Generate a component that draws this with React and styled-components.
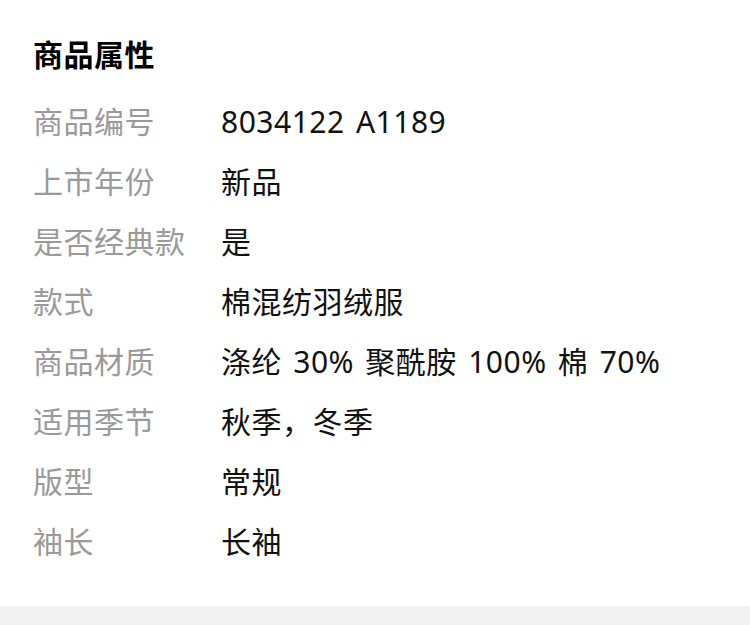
import styled, { createGlobalStyle } from "styled-components";

const GlobalStyle = createGlobalStyle`
    html, body {
        margin: 0;
        padding: 0;
        background: #ffffff;
    }
    body {
        font-family: "Noto Sans", "Noto Sans CJK SC", sans-serif;
    }
`;

const Page = styled.div`
    width: 750px;
    background: #ffffff;
`;

const Section = styled.section`
    padding: 35px 33px 34px;
`;

const Title = styled.h2`
    margin: 0 0 17px;
    font-size: 30px;
    letter-spacing: 0.5px;
    line-height: 40px;
    font-weight: 700;
    color: #000000;
`;

const AttrList = styled.dl`
    margin: 0;
    display: flex;
    flex-direction: column;
`;

const AttrRow = styled.div`
    display: grid;
    grid-template-columns: 188px 1fr;
    align-items: center;
    height: 60px;
    font-size: 30px;
    letter-spacing: 0.5px;
    line-height: 40px;
`;

const Label = styled.dt`
    margin: 0;
    color: #9a9a9a;
`;

const Value = styled.dd`
    margin: 0;
    color: #111111;
    word-spacing: 3px;
`;

const Divider = styled.div`
    height: 20px;
    background: #f2f2f2;
`;

const attrs = [
    ["商品编号", "8034122 A1189"],
    ["上市年份", "新品"],
    ["是否经典款", "是"],
    ["款式", "棉混纺羽绒服"],
    ["商品材质", "涤纶 30% 聚酰胺 100% 棉 70%"],
    ["适用季节", "秋季，冬季"],
    ["版型", "常规"],
    ["袖长", "长袖"],
];

export default function App() {
    return (
        <Page>
            <GlobalStyle />
            <Section>
                <Title>商品属性</Title>
                <AttrList>
                    {attrs.map(([label, value]) => (
                        <AttrRow key={label}>
                            <Label>{label}</Label>
                            <Value>{value}</Value>
                        </AttrRow>
                    ))}
                </AttrList>
            </Section>
            <Divider />
        </Page>
    );
}
